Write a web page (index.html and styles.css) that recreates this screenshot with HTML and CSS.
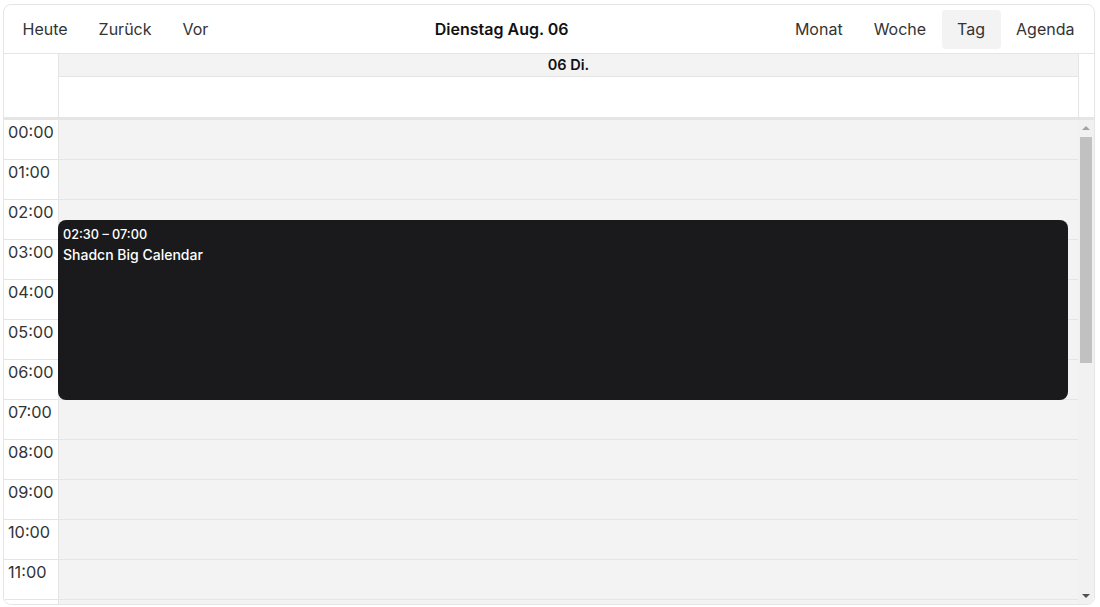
FILE: index.html
```html
<!DOCTYPE html>
<html lang="de">
<head>
<meta charset="utf-8">
<title>Kalender</title>
<link rel="stylesheet" href="styles.css">
</head>
<body>
<div class="calendar">
  <div class="toolbar">
    <div class="btn-group">
      <button class="btn">Heute</button>
      <button class="btn">Zurück</button>
      <button class="btn">Vor</button>
    </div>
    <div class="title">Dienstag Aug. 06</div>
    <div class="btn-group">
      <button class="btn">Monat</button>
      <button class="btn">Woche</button>
      <button class="btn active">Tag</button>
      <button class="btn">Agenda</button>
    </div>
  </div>
  <div class="time-header">
    <div class="header-gutter"></div>
    <div class="header-day">
      <div class="day-label">06 Di.</div>
      <div class="allday"></div>
    </div>
    <div class="header-scroll-gap"></div>
  </div>
  <div class="time-content">
    <div class="viewport">
      <div class="gutter">
        <div class="slot">00:00</div>
        <div class="slot">01:00</div>
        <div class="slot">02:00</div>
        <div class="slot">03:00</div>
        <div class="slot">04:00</div>
        <div class="slot">05:00</div>
        <div class="slot">06:00</div>
        <div class="slot">07:00</div>
        <div class="slot">08:00</div>
        <div class="slot">09:00</div>
        <div class="slot">10:00</div>
        <div class="slot">11:00</div>
        <div class="slot"></div>
      </div>
      <div class="day-column">
        <div class="row"></div><div class="row"></div><div class="row"></div><div class="row"></div>
        <div class="row"></div><div class="row"></div><div class="row"></div><div class="row"></div>
        <div class="row"></div><div class="row"></div><div class="row"></div><div class="row"></div>
        <div class="row"></div>
        <div class="event" style="top: 100px; height: 180px;">
          <div class="event-time">02:30 – 07:00</div>
          <div class="event-title">Shadcn Big Calendar</div>
        </div>
      </div>
    </div>
    <div class="scrollbar">
      <div class="arrow arrow-up"></div>
      <div class="track"><div class="thumb"></div></div>
      <div class="arrow arrow-down"></div>
    </div>
  </div>
</div>
</body>
</html>
```
FILE: styles.css
```css
* { box-sizing: border-box; }
html, body { margin: 0; padding: 0; background: #fff; }
body {
  padding: 4px 5px 2px 3px;
  font-family: Inter, "Noto Sans", "Liberation Sans", sans-serif;
  color: #222;
}
.calendar {
  border: 1px solid #e5e5e5;
  border-radius: 8px;
  height: 601px;
  overflow: hidden;
  display: flex;
  flex-direction: column;
}
.toolbar {
  height: 49px;
  flex: none;
  display: flex;
  align-items: center;
  justify-content: space-between;
  padding: 0 4px 0 3px;
  border-bottom: 1px solid #e5e5e5;
}
.btn-group { display: flex; }
.btn {
  font: 400 16px Inter, "Noto Sans", sans-serif;
  color: #333;
  background: transparent;
  border: 0;
  border-radius: 4px;
  padding: 0 15.5px 1px;
  height: 39px;
  cursor: pointer;
}
.btn.active { background: #f3f3f3; }
.title {
  font-size: 16px;
  font-weight: 600;
  color: #111;
  padding-bottom: 1px;
}
.time-header {
  flex: none;
  display: flex;
  border-bottom: 3px solid #e5e5e5;
}
.header-gutter {
  width: 55px;
  flex: none;
  border-right: 1px solid #e5e5e5;
}
.header-day { flex: 1; }
.day-label {
  height: 23px;
  background: #f3f3f3;
  border-bottom: 1px solid #e5e5e5;
  text-align: center;
  font-size: 14.5px;
  font-weight: 600;
  line-height: 22px;
  color: #111;
}
.allday { height: 40px; }
.header-scroll-gap {
  width: 16px;
  flex: none;
  border-left: 1px solid #e5e5e5;
}
.time-content {
  flex: 1;
  min-height: 0;
  display: flex;
}
.viewport {
  flex: 1;
  display: flex;
  align-items: flex-start;
  overflow: hidden;
}
.gutter {
  width: 55px;
  flex: none;
  border-right: 1px solid #e5e5e5;
  background: #fff;
}
.slot {
  height: 40px;
  border-bottom: 1px solid #e5e5e5;
  padding: 1px 0 0 4px;
  font-size: 16.3px;
  line-height: 22px;
  color: #333;
}
.day-column {
  flex: 1;
  position: relative;
  background: #f3f3f3;
}
.row {
  height: 40px;
  border-bottom: 1px solid #e5e5e5;
}
.event {
  position: absolute;
  left: -1px;
  right: 10px;
  background: #1a1a1c;
  border-radius: 8px;
  color: #fff;
  padding: 7px 5px;
}
.event-time {
  font-size: 12.7px;
  font-weight: 500;
  line-height: 16px;
}
.event-title {
  font-size: 14px;
  font-weight: 500;
  line-height: 19px;
  margin-top: 2px;
}
.scrollbar {
  width: 16px;
  flex: none;
  background: #f1f1f1;
  display: flex;
  flex-direction: column;
}
.arrow {
  height: 16px;
  flex: none;
  display: flex;
  align-items: center;
  justify-content: center;
}
.arrow::before {
  content: "";
  width: 0;
  height: 0;
  border-left: 4px solid transparent;
  border-right: 4px solid transparent;
}
.arrow-up::before { border-bottom: 4px solid #a3a3a3; }
.arrow-down::before { border-top: 4px solid #505050; }
.track {
  flex: 1;
  padding: 1px 2px 0 2px;
}
.thumb {
  height: 226px;
  background: #c1c1c1;
}
```
